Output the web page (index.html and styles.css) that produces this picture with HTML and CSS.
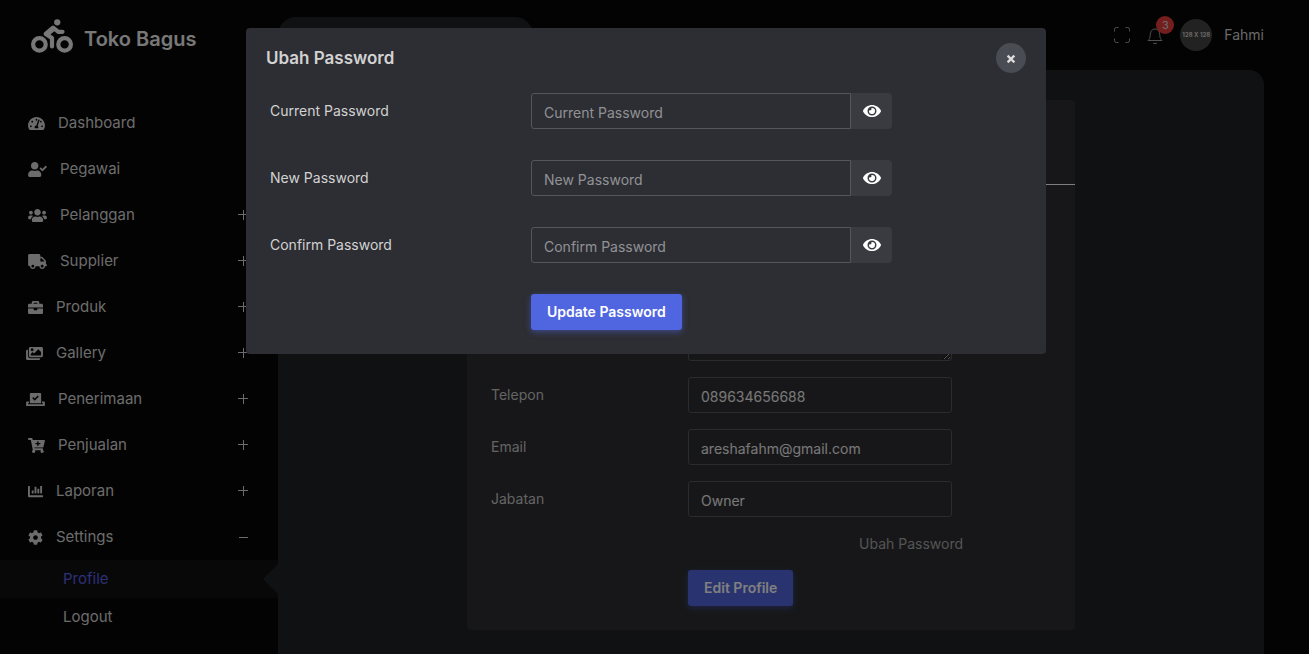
FILE: index.html
```html
<!DOCTYPE html>
<html lang="id">
<head>
<meta charset="utf-8">
<meta name="viewport" content="width=device-width, initial-scale=1">
<title>Toko Bagus</title>
<link rel="stylesheet" href="styles.css">
</head>
<body>
<svg class="defs" width="0" height="0" aria-hidden="true">
  <symbol id="plus" viewBox="0 0 10 10"><path d="M5.500 0v10M0 4.500h10" fill="none" stroke="currentColor"/></symbol>
  <symbol id="eye" viewBox="0 0 576 512"><path d="M572.5 241.400C518.300 135.600 410.900 64 288 64S57.700 135.600 3.500 241.400a32.400 32.400 0 0 0 0 29.200C57.700 376.400 165.100 448 288 448s230.300-71.600 284.500-177.400a32.400 32.400 0 0 0 0-29.200zM288 400a144 144 0 1 1 144-144 143.900 143.900 0 0 1-144 144zm0-240a95.300 95.300 0 0 0-25.300 3.800 47.900 47.900 0 0 1-66.900 66.900A95.800 95.800 0 1 0 288 160z"/></symbol>
</svg>
<div class="app">
  <aside class="sidebar">
    <a class="brand" href="#">
      <svg width="42" height="34" viewBox="0 0 640 512"><path d="M400 96a48 48 0 1 0-48-48 48 48 0 0 0 48 48zm-4 121a31.900 31.900 0 0 0 20 7h64a32 32 0 0 0 0-64h-52.780L356 103a31.940 31.940 0 0 0-40.810.68l-112 96a32 32 0 0 0 3.080 50.920L288 305.120V416a32 32 0 0 0 64 0V288a32 32 0 0 0-14.250-26.620l-41.360-27.570 58.250-49.920zm116 39a128 128 0 1 0 128 128 128 128 0 0 0-128-128zm0 192a64 64 0 1 1 64-64 64 64 0 0 1-64 64zM128 256a128 128 0 1 0 128 128 128 128 0 0 0-128-128zm0 192a64 64 0 1 1 64-64 64 64 0 0 1-64 64z"/></svg>
      <span>Toko Bagus</span>
    </a>
    <nav class="menu">
      <a class="item" href="#"><svg width="17" height="15" viewBox="0 0 576 512"><path d="M288 32C128.940 32 0 160.940 0 320c0 52.800 14.250 102.260 39.060 144.800 5.610 9.620 16.300 15.200 27.440 15.200h443c11.140 0 21.830-5.580 27.440-15.200C561.750 422.260 576 372.800 576 320c0-159.060-128.940-288-288-288zm0 64c14.710 0 26.580 10.130 30.320 23.650-1.110 2.260-2.640 4.230-3.450 6.670l-9.220 27.670c-5.130 3.490-10.970 6.010-17.640 6.010-17.670 0-32-14.330-32-32S270.330 96 288 96zM96 384c-17.670 0-32-14.330-32-32s14.330-32 32-32 32 14.330 32 32-14.330 32-32 32zm48-160c-17.670 0-32-14.330-32-32s14.330-32 32-32 32 14.330 32 32-14.330 32-32 32zm246.770-72.410l-61.330 184C343.130 347.330 352 364.540 352 384c0 11.720-3.380 22.550-8.880 32H232.880c-5.500-9.450-8.880-20.280-8.880-32 0-33.940 26.500-61.430 59.900-63.590l61.340-184.010c4.170-12.560 17.730-19.450 30.360-15.170 12.570 4.190 19.350 17.790 15.170 30.360zm14.660 57.200l15.520-46.550c3.470-1.290 7.130-2.230 11.050-2.230 17.670 0 32 14.330 32 32s-14.330 32-32 32c-11.380-.01-20.890-6.280-26.570-15.220zM480 384c-17.670 0-32-14.330-32-32s14.330-32 32-32 32 14.330 32 32-14.330 32-32 32z"/></svg><span>Dashboard</span></a>
      <a class="item" href="#"><svg width="19" height="15" viewBox="0 0 640 512"><path d="M224 256c70.700 0 128-57.300 128-128S294.700 0 224 0 96 57.300 96 128s57.300 128 128 128zm89.600 32h-16.700c-22.200 10.200-46.900 16-72.900 16s-50.600-5.800-72.900-16h-16.700C60.200 288 0 348.200 0 422.400V464c0 26.500 21.500 48 48 48h352c26.500 0 48-21.500 48-48v-41.600c0-74.200-60.200-134.400-134.400-134.400zm323-128.400l-27.800-28.100c-4.600-4.700-12.100-4.700-16.800-.1l-104.800 104-45.500-45.800c-4.600-4.700-12.100-4.700-16.800-.1l-28.100 27.900c-4.700 4.600-4.700 12.100-.1 16.800l81.700 82.300c4.600 4.700 12.100 4.700 16.800.1l141.300-140.200c4.600-4.700 4.700-12.200.1-16.800z"/></svg><span>Pegawai</span></a>
      <a class="item" href="#"><svg width="19" height="15" viewBox="0 0 640 512"><path d="M96 224c35.300 0 64-28.700 64-64s-28.700-64-64-64-64 28.700-64 64 28.700 64 64 64zm448 0c35.300 0 64-28.700 64-64s-28.700-64-64-64-64 28.700-64 64 28.700 64 64 64zm32 32h-64c-17.600 0-33.500 7.100-45.100 18.600 40.300 22.100 68.900 62 75.100 109.400h66c17.700 0 32-14.300 32-32v-32c0-35.300-28.700-64-64-64zm-256 0c61.900 0 112-50.100 112-112S381.900 32 320 32 208 82.100 208 144s50.100 112 112 112zm76.800 32h-8.300c-20.800 10-43.900 16-68.500 16s-47.600-6-68.500-16h-8.300C179.600 288 128 339.600 128 403.200V432c0 26.500 21.500 48 48 48h288c26.500 0 48-21.500 48-48v-28.800c0-63.600-51.600-115.200-115.200-115.200zm-223.700-13.400C161.500 263.100 145.600 256 128 256H64c-35.300 0-64 28.700-64 64v32c0 17.700 14.300 32 32 32h65.900c6.300-47.400 34.900-87.300 75.200-109.400z"/></svg><span>Pelanggan</span><svg class="toggle" width="10" height="10"><use href="#plus"/></svg></a>
      <a class="item" href="#"><svg width="19" height="15" viewBox="0 0 640 512"><path d="M624 352h-16V243.900c0-12.700-5.100-24.900-14.100-33.900L494 110.100c-9-9-21.200-14.100-33.900-14.100H416V48c0-26.500-21.500-48-48-48H48C21.500 0 0 21.500 0 48v320c0 26.500 21.500 48 48 48h16c0 53 43 96 96 96s96-43 96-96h128c0 53 43 96 96 96s96-43 96-96h48c8.800 0 16-7.200 16-16v-32c0-8.800-7.200-16-16-16zM160 464c-26.500 0-48-21.500-48-48s21.500-48 48-48 48 21.500 48 48-21.500 48-48 48zm320 0c-26.500 0-48-21.500-48-48s21.500-48 48-48 48 21.500 48 48-21.500 48-48 48zm80-208H416V144h44.100l99.900 99.900V256z"/></svg><span>Supplier</span><svg class="toggle" width="10" height="10"><use href="#plus"/></svg></a>
      <a class="item" href="#"><svg width="15" height="15" viewBox="0 0 512 512"><path d="M320 336c0 8.800-7.200 16-16 16h-96c-8.800 0-16-7.200-16-16v-48H0v144c0 25.600 22.400 48 48 48h416c25.600 0 48-22.400 48-48V288H320v48zm144-208h-80V80c0-25.600-22.400-48-48-48H176c-25.600 0-48 22.400-48 48v48H48c-25.600 0-48 22.400-48 48v80h512v-80c0-25.600-22.400-48-48-48zm-144 0H192V96h128v32z"/></svg><span>Produk</span><svg class="toggle" width="10" height="10"><use href="#plus"/></svg></a>
      <a class="item item-wide" href="#"><svg width="17" height="15" viewBox="0 0 576 512"><path d="M480 416v16c0 26.500-21.500 48-48 48H48c-26.500 0-48-21.500-48-48V176c0-26.500 21.500-48 48-48h16v208c0 44.100 35.900 80 80 80h336zm96-80V80c0-26.500-21.500-48-48-48H144c-26.500 0-48 21.500-48 48v256c0 26.500 21.500 48 48 48h384c26.500 0 48-21.500 48-48zM256 128c0 26.500-21.500 48-48 48s-48-21.500-48-48 21.500-48 48-48 48 21.500 48 48zm-96 144l55.500-55.500c4.700-4.700 12.300-4.700 17 0L272 256l135.500-135.500c4.700-4.700 12.300-4.700 17 0L512 208v112H160v-48z"/></svg><span>Gallery</span><svg class="toggle" width="10" height="10"><use href="#plus"/></svg></a>
      <a class="item item-wide" href="#"><svg width="19" height="15" viewBox="0 0 640 512"><path d="M608 320h-64v64h22.400c5.300 0 9.600 3.600 9.600 8v16c0 4.400-4.300 8-9.600 8H73.600c-5.300 0-9.600-3.600-9.600-8v-16c0-4.400 4.300-8 9.600-8H96v-64H32c-17.700 0-32 14.300-32 32v96c0 17.700 14.300 32 32 32h576c17.700 0 32-14.300 32-32v-96c0-17.700-14.300-32-32-32zm-96 64V64.300c0-17.900-14.500-32.300-32.300-32.300H160.400C142.500 32 128 46.500 128 64.300V384h384zM211.200 202l25.500-25.300c4.200-4.200 11-4.200 15.200.1l41.300 41.600 95.200-94.400c4.200-4.200 11-4.200 15.200.1l25.300 25.500c4.200 4.200 4.200 11-.1 15.200L300.500 292c-4.200 4.200-11 4.200-15.200-.1l-74.100-74.700c-4.300-4.200-4.200-11 0-15.200z"/></svg><span>Penerimaan</span><svg class="toggle" width="10" height="10"><use href="#plus"/></svg></a>
      <a class="item" href="#"><svg width="17" height="15" viewBox="0 0 576 512"><path d="M504.700 320H211.600l6.500 32h268.400c15.400 0 26.800 14.300 23.400 29.300l-5.500 24.300c18.700 9.100 31.600 28.200 31.600 50.400 0 31.200-25.500 56.400-56.800 56-29.800-.4-54.400-24.600-55.200-54.400-.4-16.300 6.100-31 16.800-41.500H231.200C241.600 426.200 248 440.300 248 456c0 31.800-26.500 57.400-58.700 55.900-28.500-1.300-51.800-24.400-53.300-52.900-1.200-22 10.400-41.500 28.100-51.600L93.900 64H24C10.700 64 0 53.300 0 40V24C0 10.700 10.700 0 24 0h102.500c11.400 0 21.200 8 23.500 19.200l9.200 44.800H552c15.400 0 26.800 14.300 23.400 29.300l-47.300 208C525.600 312.200 515.900 320 504.700 320zM408 168h-48v-40c0-8.800-7.200-16-16-16h-16c-8.800 0-16 7.200-16 16v40h-48c-8.800 0-16 7.200-16 16v16c0 8.800 7.200 16 16 16h48v40c0 8.800 7.200 16 16 16h16c8.800 0 16-7.200 16-16v-40h48c8.800 0 16-7.200 16-16v-16c0-8.800-7.200-16-16-16z"/></svg><span>Penjualan</span><svg class="toggle" width="10" height="10"><use href="#plus"/></svg></a>
      <a class="item" href="#"><svg width="15" height="15" viewBox="0 0 512 512"><path d="M332.800 320h38.400c6.400 0 12.800-6.400 12.800-12.800V172.800c0-6.400-6.400-12.800-12.800-12.800h-38.400c-6.400 0-12.800 6.400-12.800 12.800v134.400c0 6.400 6.400 12.800 12.800 12.800zm96 0h38.400c6.400 0 12.800-6.400 12.800-12.800V76.800c0-6.400-6.400-12.800-12.800-12.800h-38.400c-6.400 0-12.800 6.400-12.800 12.800v230.400c0 6.400 6.400 12.800 12.800 12.800zm-288 0h38.400c6.400 0 12.800-6.400 12.800-12.800v-70.400c0-6.400-6.400-12.800-12.800-12.800h-38.400c-6.400 0-12.800 6.400-12.800 12.800v70.400c0 6.400 6.400 12.800 12.800 12.800zm96 0h38.400c6.400 0 12.800-6.400 12.800-12.800V108.800c0-6.400-6.400-12.800-12.800-12.800h-38.400c-6.400 0-12.800 6.400-12.800 12.800v198.400c0 6.400 6.400 12.800 12.800 12.800zM496 384H64V80c0-8.800-7.200-16-16-16H16C7.200 64 0 71.200 0 80v336c0 17.700 14.300 32 32 32h464c8.800 0 16-7.200 16-16v-32c0-8.800-7.200-16-16-16z"/></svg><span>Laporan</span><svg class="toggle" width="10" height="10"><use href="#plus"/></svg></a>
      <a class="item" href="#"><svg width="15" height="15" viewBox="0 0 512 512"><path d="M487.400 315.700l-42.600-24.600c4.300-23.200 4.300-47 0-70.200l42.600-24.600c4.900-2.800 7.100-8.600 5.500-14-11.100-35.600-30-67.800-54.700-94.600-3.800-4.100-10-5.100-14.800-2.300L380.800 110c-17.900-15.400-38.500-27.300-60.800-35.100V25.800c0-5.600-3.900-10.500-9.400-11.700-36.700-8.200-74.300-7.800-109.200 0-5.500 1.200-9.400 6.100-9.400 11.700V75c-22.200 7.900-42.800 19.800-60.800 35.100L88.700 85.500c-4.900-2.800-11-1.900-14.800 2.300-24.700 26.700-43.600 58.900-54.700 94.600-1.700 5.400.6 11.200 5.500 14L67.300 221c-4.300 23.200-4.300 47 0 70.200l-42.600 24.600c-4.900 2.800-7.100 8.600-5.500 14 11.100 35.600 30 67.800 54.700 94.600 3.800 4.100 10 5.100 14.800 2.300l42.600-24.600c17.900 15.400 38.500 27.300 60.800 35.100v49.200c0 5.600 3.900 10.500 9.400 11.700 36.700 8.200 74.300 7.800 109.200 0 5.500-1.200 9.400-6.100 9.400-11.700v-49.200c22.200-7.900 42.800-19.800 60.800-35.100l42.600 24.600c4.900 2.800 11 1.900 14.800-2.300 24.700-26.700 43.600-58.900 54.700-94.600 1.500-5.500-.7-11.300-5.600-14.100zM256 336c-44.100 0-80-35.900-80-80s35.900-80 80-80 80 35.900 80 80-35.900 80-80 80z"/></svg><span>Settings</span><svg class="toggle" width="10" height="10" viewBox="0 0 10 10"><path d="M1 5.500h9" stroke="currentColor"/></svg></a>
      <a class="subitem active" href="#">Profile</a>
      <a class="subitem" href="#">Logout</a>
    </nav>
  </aside>
  <div class="main">
    <header class="topbar">
      <input class="search" type="search" aria-label="Search">
      <div class="tools">
        <button class="tool" type="button" aria-label="Fullscreen"><svg class="outline" width="16" height="16" viewBox="0 0 16 16"><path d="M.5 4.500v-2a2 2 0 0 1 2-2h2M11.500.5h2a2 2 0 0 1 2 2v2M15.500 11.500v2a2 2 0 0 1-2 2h-2M4.500 15.500h-2a2 2 0 0 1-2-2v-2"/></svg></button>
        <button class="tool" type="button" aria-label="Notifications"><svg class="outline" width="16" height="17" viewBox="0 0 16 17"><path d="M1 13.500h14c-1.500-1.300-2-2.500-2.200-5C12.700 4.500 11 2 8 2S3.300 4.500 3.200 8.500C3 11 2.500 12.200 1 13.500zM6 16c.8.8 3.200.8 4 0"/></svg><span class="badge">3</span></button>
        <span class="avatar">128 X 128</span>
        <span class="user">Fahmi</span>
      </div>
    </header>
    <main class="content">
      <section class="card">
        <div class="card-head"></div>
        <form class="profile">
          <span></span>
          <textarea class="field area" aria-label="Alamat"></textarea>
          <label for="telepon">Telepon</label>
          <input class="field" id="telepon" value="089634656688">
          <label for="email">Email</label>
          <input class="field" id="email" value="areshafahm@gmail.com">
          <label for="jabatan">Jabatan</label>
          <input class="field" id="jabatan" value="Owner">
          <a class="change" href="#">Ubah Password</a>
          <button class="btn second" type="button">Edit Profile</button>
        </form>
      </section>
    </main>
  </div>
</div>
<div class="backdrop">
  <div class="modal" role="dialog" aria-labelledby="modal-title">
    <div class="modal-head">
      <h2 id="modal-title">Ubah Password</h2>
      <button class="close" type="button" aria-label="Close"><svg width="10" height="10" viewBox="0 0 10 10"><path d="M2.500 3.500l5 5M7.500 3.500l-5 5" fill="none" stroke="currentColor" stroke-width="2.400" stroke-linecap="square"/></svg></button>
    </div>
    <form class="passwords">
      <label for="current">Current Password</label>
      <div class="group"><input class="field" id="current" type="password" placeholder="Current Password"><button class="reveal" type="button" aria-label="Show current password"><svg width="18" height="16"><use href="#eye"/></svg></button></div>
      <label for="new">New Password</label>
      <div class="group"><input class="field" id="new" type="password" placeholder="New Password"><button class="reveal" type="button" aria-label="Show new password"><svg width="18" height="16"><use href="#eye"/></svg></button></div>
      <label for="confirm">Confirm Password</label>
      <div class="group"><input class="field" id="confirm" type="password" placeholder="Confirm Password"><button class="reveal" type="button" aria-label="Show confirmed password"><svg width="18" height="16"><use href="#eye"/></svg></button></div>
      <button class="btn second" type="submit">Update Password</button>
    </form>
  </div>
</div>
</body>
</html>
```

FILE: styles.css
```css
* { box-sizing: border-box; }
body {
  margin: 0;
  background: #060606;
  color: #d2d2d2;
  font: 14px/22px Inter, "Liberation Sans", sans-serif;
  overflow: hidden;
}
a { color: inherit; text-decoration: none; }
button, input, textarea { font: inherit; color: inherit; }
button { border: 0; padding: 0; cursor: pointer; }
svg { display: block; flex: none; fill: currentColor; }
.outline { fill: none; stroke: currentColor; }
.defs { position: absolute; }

.app { display: flex; min-height: 100vh; }
.sidebar { flex: 0 0 278px; }
.brand {
  display: flex;
  align-items: center;
  gap: 11px;
  height: 72px;
  margin-bottom: 28px;
  padding-left: 31px;
  font-size: 20px;
  font-weight: 600;
  line-height: 28px;
  color: #f0f0f0;
}
.brand span { padding-top: 6px; }
.menu { font-size: 15px; color: #d8d8d8; }
.item {
  display: flex;
  align-items: center;
  gap: 13px;
  height: 46px;
  padding: 0 30px 0 28px;
}
.item-wide { padding-left: 26px; }
.toggle { margin-left: auto; }
.subitem {
  position: relative;
  display: flex;
  align-items: center;
  height: 38px;
  padding-left: 63px;
}
.active { background: #111; color: #5a60e8; }
.active::after {
  content: "";
  position: absolute;
  right: 0;
  top: 4px;
  border: 15px solid transparent;
  border-left: 0;
  border-right-color: #202225;
}

.main { flex: 1; display: flex; flex-direction: column; padding-right: 45px; }
.topbar {
  display: flex;
  align-items: center;
  justify-content: space-between;
  height: 70px;
}
.search {
  width: 255px;
  height: 36px;
  border: 0;
  border-radius: 18px;
  background: #202225;
}
.tools { display: flex; align-items: center; }
.tool { position: relative; background: none; color: #a0a0a0; margin-right: 17px; }
.badge {
  position: absolute;
  left: 9px;
  top: -11px;
  width: 18px;
  height: 18px;
  border-radius: 50%;
  background: #ea3c3c;
  color: #ddd;
  font-size: 11px;
  line-height: 18px;
}
.avatar {
  width: 32px;
  height: 32px;
  border-radius: 50%;
  background: #444;
  color: #ccc;
  font-size: 6px;
  font-weight: 700;
  line-height: 32px;
  text-align: center;
  white-space: nowrap;
  margin-right: 12px;
}
.content { flex: 1; padding: 30px 30px 24px; background: #202225; border-top-right-radius: 15px; }
.card { max-width: 608px; margin: 0 auto; border-radius: 4px; background: #2e2f32; }
.card-head { height: 85px; border-bottom: 1px solid #fff; }
.profile {
  display: grid;
  grid-template-columns: 197px 1fr;
  gap: 16px 0;
  max-width: 520px;
  padding: 88px 24px 24px;
}
.profile label { line-height: 36px; color: #c8c8c8; }
.field {
  height: 36px;
  width: 264px;
  padding: 2px 12px 0;
  border: 1px solid #55565a;
  border-radius: 3px;
  background: transparent;
  color: #f0f0f0;
}
.area { height: 88px; display: block; }
.change { grid-column: 1 / -1; justify-self: end; line-height: 21px; color: #a8a8a8; }
.btn {
  height: 36px;
  padding: 0 16px;
  border-radius: 3px;
  background: #5066e0;
  color: #fff;
  font-weight: 600;
  box-shadow: 0 2px 6px #5066e080;
}
.second { grid-column: 2; justify-self: start; }

.backdrop {
  position: fixed;
  inset: 0;
  padding: 28px 17px 28px 0;
  background: rgba(0, 0, 0, .5);
}
.modal { max-width: 800px; margin: 0 auto; border-radius: 4px; background: #2d2e33; }
.modal-head {
  display: flex;
  align-items: center;
  justify-content: space-between;
  padding: 15px 20px 0;
}
.modal-head h2 { margin: 0; font-size: 17px; font-weight: 600; line-height: 30px; }
.close {
  display: grid;
  place-items: center;
  width: 30px;
  height: 30px;
  border-radius: 50%;
  background: #4a4c53;
  color: #ddd;
}
.passwords {
  display: grid;
  grid-template-columns: 261px 1fr;
  gap: 31px 0;
  padding: 20px 24px 24px;
}
.passwords label { line-height: 36px; }
.group { display: flex; }
.group .field { width: 320px; border-radius: 3px 0 0 3px; }
.field::placeholder { color: #919296; opacity: 1; }
.reveal {
  display: grid;
  place-items: center;
  width: 41px;
  height: 36px;
  border-radius: 0 4px 4px 0;
  background: #3a3b40;
  color: #fff;
}
```
